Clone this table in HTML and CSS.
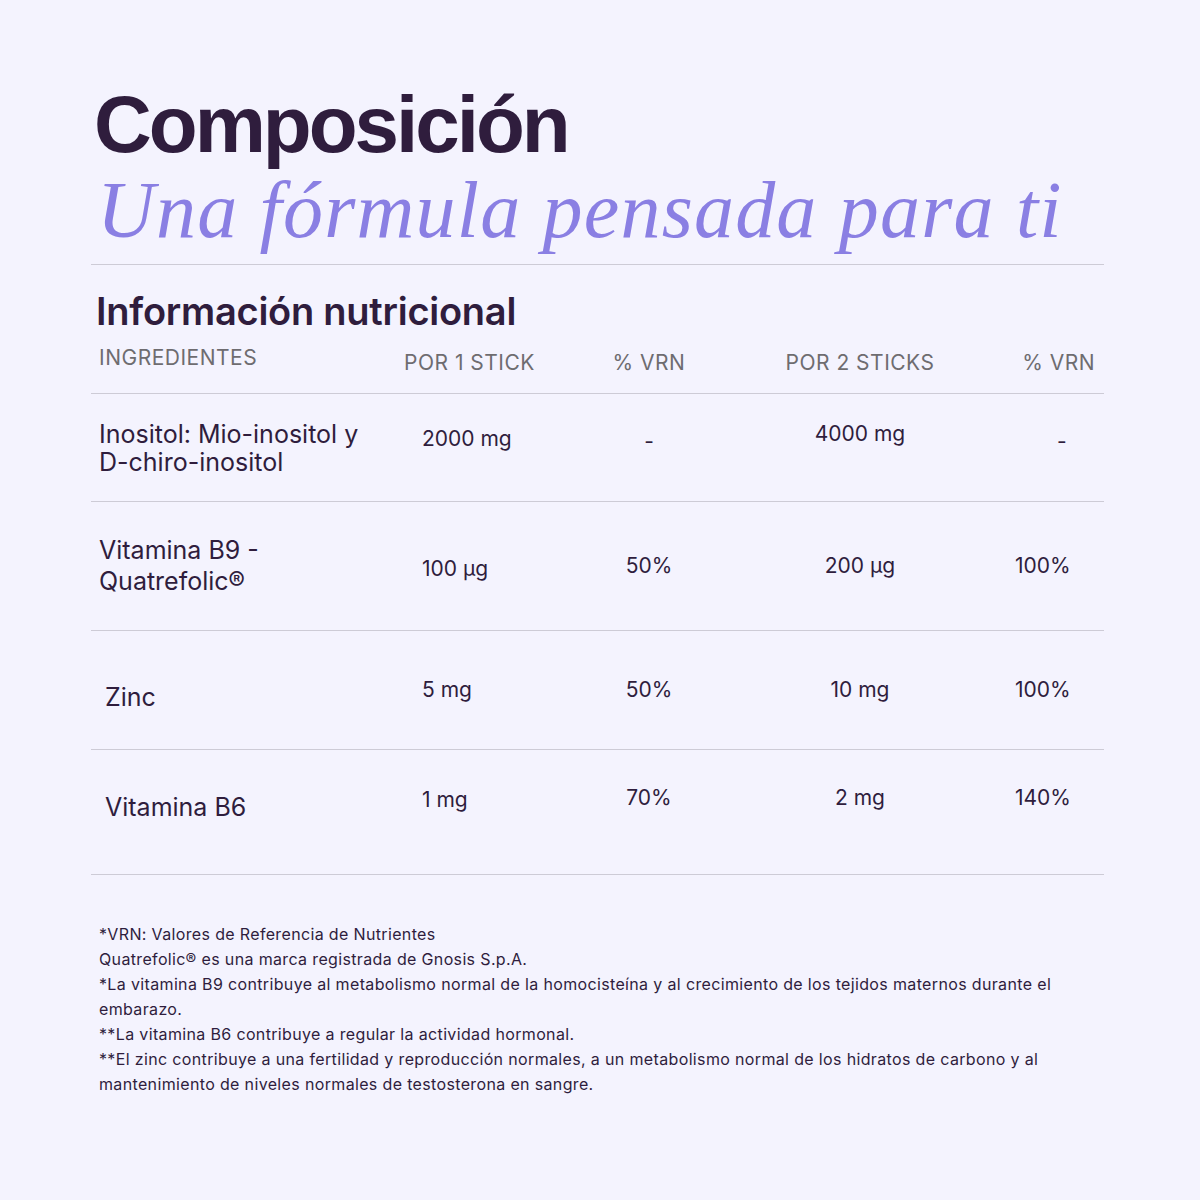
FILE: index.html
```html
<!DOCTYPE html>
<html lang="es">
<head>
<meta charset="utf-8">
<title>Composición</title>
<link rel="stylesheet" href="styles.css">
</head>
<body>
<main class="page">
  <h1 class="title">Composición</h1>
  <p class="subtitle">Una fórmula pensada para ti</p>
  <hr class="rule">
  <h2 class="section">Información nutricional</h2>
  <div class="table">
    <div class="row head">
      <div class="c1 h-ing">INGREDIENTES</div>
      <div class="c2">POR 1 STICK</div>
      <div class="c3">% VRN</div>
      <div class="c4">POR 2 STICKS</div>
      <div class="c5">% VRN</div>
    </div>
    <div class="row r1">
      <div class="c1 ing">Inositol: Mio-inositol y<br>D-chiro-inositol</div>
      <div class="c2 up9">2000 mg</div>
      <div class="c3 up6">-</div>
      <div class="c4 up14">4000 mg</div>
      <div class="c5 dash up6">-</div>
    </div>
    <div class="row r2">
      <div class="c1 ing tall">Vitamina B9 -<br>Quatrefolic®</div>
      <div class="c2 down3">100 µg</div>
      <div class="c3">50%</div>
      <div class="c4">200 µg</div>
      <div class="c5">100%</div>
    </div>
    <div class="row r3">
      <div class="c1 ing indent down7">Zinc</div>
      <div class="c2">5 mg</div>
      <div class="c3">50%</div>
      <div class="c4">10 mg</div>
      <div class="c5">100%</div>
    </div>
    <div class="row r4">
      <div class="c1 ing indent up5">Vitamina B6</div>
      <div class="c2 up12">1 mg</div>
      <div class="c3 up14">70%</div>
      <div class="c4 up14">2 mg</div>
      <div class="c5 up14">140%</div>
    </div>
  </div>
  <div class="notes">
    <p>*VRN: Valores de Referencia de Nutrientes</p>
    <p>Quatrefolic® es una marca registrada de Gnosis S.p.A.</p>
    <p>*La vitamina B9 contribuye al metabolismo normal de la homocisteína y al crecimiento de los tejidos maternos durante el embarazo.</p>
    <p>**La vitamina B6 contribuye a regular la actividad hormonal.</p>
    <p>**El zinc contribuye a una fertilidad y reproducción normales, a un metabolismo normal de los hidratos de carbono y al mantenimiento de niveles normales de testosterona en sangre.</p>
  </div>
</main>
</body>
</html>
```

FILE: styles.css
```css
* { box-sizing: border-box; }
html, body { margin: 0; padding: 0; }
body {
  background: #f4f3fe;
  color: #2f1d3d;
  font-family: Inter, "Noto Sans", sans-serif;
  width: 1200px;
  height: 1200px;
}
.page {
  padding: 85px 96px 0 91px;
}
.title {
  margin: 0 0 5px 3px;
  font-family: "Liberation Sans", Arial, sans-serif;
  font-weight: 700;
  font-size: 80px;
  line-height: 80px;
  letter-spacing: -3px;
  color: #2f1d3d;
}
.subtitle {
  margin: 0 0 14px 6px;
  font-family: "Liberation Serif", "Times New Roman", serif;
  font-style: italic;
  font-size: 80px;
  line-height: 80px;
  letter-spacing: 1.2px;
  color: #8a7fe3;
}
.rule {
  margin: 0;
  border: 0;
  border-top: 1px solid #cdcbd6;
}
.section {
  margin: 22px 0 0 5px;
  font-size: 38px;
  line-height: 48px;
  font-weight: 600;
  letter-spacing: -0.25px;
  color: #2f1d3d;
}
.table { display: flex; flex-direction: column; }
.row {
  display: grid;
  grid-template-columns: 313px 156px 178px 244px 1fr;
  align-items: center;
  border-bottom: 1px solid #cdcbd6;
  font-size: 21px;
  line-height: 26px;
}
.row.head {
  height: 59px;
  align-items: start;
  color: #6e6c70;
  font-size: 21px;
  line-height: 24px;
  letter-spacing: 0.5px;
  padding-top: 16px;
}
.row.head .h-ing { margin-top: -5px; }
.r1 { height: 108px; }
.r2 { height: 129px; }
.r3 { height: 119px; }
.r4 { height: 125px; }

.c1 { padding-left: 8px; }
.c2 { padding-left: 0; }
.row:not(.head) .c2 { padding-left: 18px; }
.c3 { text-align: center; }
.c4 { text-align: center; }
.c5 { padding-left: 33px; }
.row.head .c5 { text-align: right; padding-right: 9px; padding-left: 0; }
.c5.dash { padding-left: 75px; }

.ing { font-size: 25px; line-height: 28px; }
.ing.tall { line-height: 31px; }
.ing.indent { padding-left: 14px; }

.up5 { margin-bottom: 10px; }
.up6 { margin-bottom: 12px; }
.up9 { margin-bottom: 18px; }
.up12 { margin-bottom: 24px; }
.up14 { margin-bottom: 28px; }
.down3 { margin-top: 6px; }
.down7 { margin-top: 14px; }

.notes {
  margin-top: 47px;
  padding-left: 8px;
  font-size: 16px;
  line-height: 25px;
  letter-spacing: 0.35px;
  color: #2f1d3d;
  max-width: 990px;
}
.notes p { margin: 0; }
```
